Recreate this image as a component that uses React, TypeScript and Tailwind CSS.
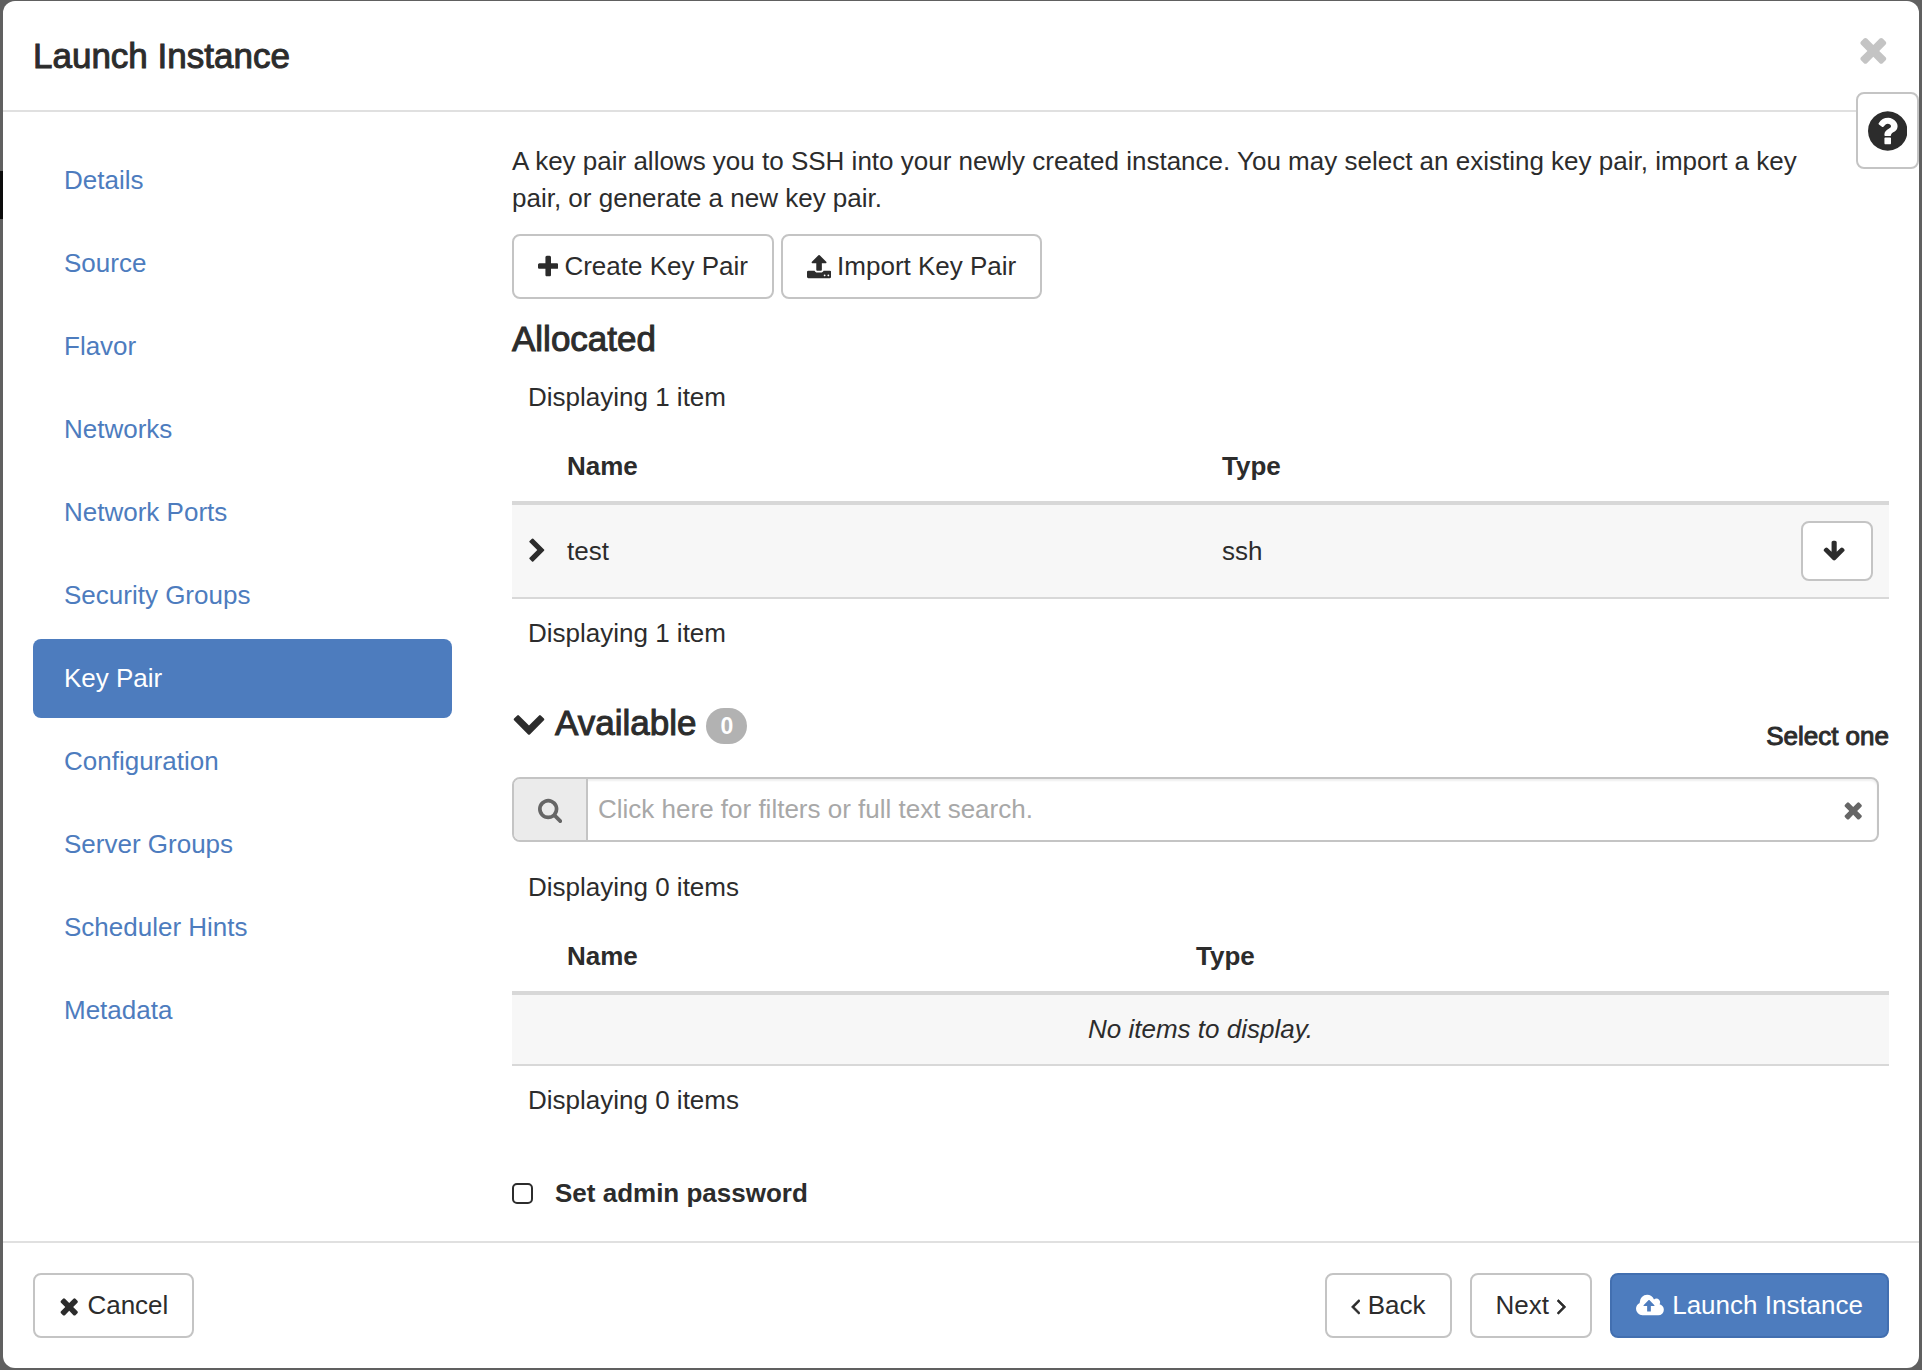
import React, { useState } from "react";

const icons = {
  times: {
    box: "192 0 1408 1792",
    d: "M1490 1322q0 40-28 68l-136 136q-28 28-68 28t-68-28l-294-294-294 294q-28 28-68 28t-68-28l-136-136q-28-28-28-68t28-68l294-294-294-294q-28-28-28-68t28-68l136-136q28-28 68-28t68 28l294 294 294-294q28-28 68-28t68 28l136 136q28 28 28 68t-28 68l-294 294 294 294q28 28 28 68z",
  },
  plus: {
    box: "192 0 1408 1792",
    d: "M1600 736v192q0 40-28 68t-68 28h-416v416q0 40-28 68t-68 28h-192q-40 0-68-28t-28-68v-416h-416q-40 0-68-28t-28-68v-192q0-40 28-68t68-28h416v-416q0-40 28-68t68-28h192q40 0 68 28t28 68v416h416q40 0 68 28t28 68z",
  },
  upload: {
    box: "64 0 1664 1792",
    d: "M1344 1472q0-26-19-45t-45-19-45 19-19 45 19 45 45 19 45-19 19-45zm256 0q0-26-19-45t-45-19-45 19-19 45 19 45 45 19 45-19 19-45zm128-224v320q0 40-28 68t-68 28h-1472q-40 0-68-28t-28-68v-320q0-40 28-68t68-28h427q21 56 70.5 92t110.5 36h256q61 0 110.5-36t70.5-92h427q40 0 68 28t28 68zm-325-648q-17 40-59 40h-256v448q0 26-19 45t-45 19h-256q-26 0-45-19t-19-45v-448h-256q-42 0-59-40-17-39 14-69l448-448q18-19 45-19t45 19l448 448q31 30 14 69z",
  },
  question: {
    box: "128 0 1536 1792",
    d: "M1024 1376v-192q0-14-9-23t-23-9h-192q-14 0-23 9t-9 23v192q0 14 9 23t23 9h192q14 0 23-9t9-23zm256-672q0-88-55.5-163t-138.5-116-170-41q-243 0-371 213-15 24 8 42l132 100q7 6 19 6 16 0 25-12 53-68 86-92 34-24 86-24 48 0 85.5 26t37.5 59q0 38-20 61t-68 45q-63 28-115.5 86.5t-52.5 125.5v36q0 14 9 23t23 9h192q14 0 23-9t9-23q0-19 21.5-49.5t54.5-49.5q32-18 49-28.5t46-35 44.5-48 28-60.5 12.5-81zm384 192q0 209-103 385.5t-279.5 279.5-385.5 103-385.5-103-279.5-279.5-103-385.5 103-385.5 279.5-279.5 385.5-103 385.5 103 279.5 279.5 103 385.5z",
  },
  chevronRight: {
    box: "256 0 1280 1792",
    d: "M1363 877l-742 742q-19 19-45 19t-45-19l-166-166q-19-19-19-45t19-45l531-531-531-531q-19-19-19-45t19-45l166-166q19-19 45-19t45 19l742 742q19 19 19 45t-19 45z",
  },
  chevronDown: {
    box: "0 0 1792 1792",
    d: "M1683 808l-742 741q-19 19-45 19t-45-19l-742-741q-19-19-19-45.5t19-45.5l166-165q19-19 45-19t45 19l531 531 531-531q19-19 45-19t45 19l166 165q19 19 19 45.5t-19 45.5z",
  },
  arrowDown: {
    box: "64 0 1664 1792",
    d: "M1675 832q0 53-37 90l-651 652q-39 37-91 37-53 0-90-37l-651-652q-38-36-38-90 0-53 38-91l74-75q39-37 91-37 53 0 90 37l294 294v-704q0-52 38-90t90-38h128q52 0 90 38t38 90v704l294-294q37-37 90-37 52 0 91 37l75 75q37 39 37 91z",
  },
  search: {
    box: "64 0 1664 1792",
    d: "M1216 832q0-185-131.5-316.5t-316.5-131.5-316.5 131.5-131.5 316.5 131.5 316.5 316.5 131.5 316.5-131.5 131.5-316.5zm512 832q0 52-38 90t-90 38q-54 0-90-38l-343-342q-179 124-399 124-143 0-273.5-55.5t-225-150-150-225-55.5-273.5 55.5-273.5 150-225 225-150 273.5-55.5 273.5 55.5 225 150 150 225 55.5 273.5q0 220-124 399l343 343q37 37 37 90z",
  },
  angleLeft: {
    box: "576 0 640 1792",
    d: "M1203 544q0 13-10 23l-393 393 393 393q10 10 10 23t-10 23l-50 50q-10 10-23 10t-23-10l-466-466q-10-10-10-23t10-23l466-466q10-10 23-10t23 10l50 50q10 10 10 23z",
  },
  angleRight: {
    box: "576 0 640 1792",
    d: "M1171 960q0 13-10 23l-466 466q-10 10-23 10t-23-10l-50-50q-10-10-10-23t10-23l393-393-393-393q-10-10-10-23t10-23l50-50q10-10 23-10t23 10l466 466q10 10 10 23z",
  },
  cloudUpload: {
    box: "-64 0 1920 1792",
    d: "M1216 864q0-14-9-23l-352-352q-9-9-23-9t-23 9l-351 351q-10 12-10 24 0 14 9 23t23 9h224v352q0 13 9.5 22.5t22.5 9.5h192q13 0 22.5-9.5t9.5-22.5v-352h224q13 0 22.5-9.5t9.5-22.5zm640 288q0 159-112.5 271.5t-271.5 112.5h-1088q-185 0-316.5-131.5t-131.5-316.5q0-130 70-240t188-165q-2-30-2-43 0-212 150-362t362-150q156 0 285.5 87t188.5 231q71-62 166-62 106 0 181 75t75 181q0 76-41 138 130 31 213.5 135.5t83.5 238.5z",
  },
};

function Icon({ name, className = "h-[26px]" }: { name: keyof typeof icons; className?: string }) {
  return (
    <svg viewBox={icons[name].box} className={`w-auto shrink-0 fill-current ${className}`} aria-hidden="true">
      <path d={icons[name].d} />
    </svg>
  );
}

const steps = [
  "Details",
  "Source",
  "Flavor",
  "Networks",
  "Network Ports",
  "Security Groups",
  "Key Pair",
  "Configuration",
  "Server Groups",
  "Scheduler Hints",
  "Metadata",
];

const btn = "flex items-center h-[65px] px-6 rounded-lg border-2 whitespace-nowrap";
const btnDefault = `${btn} bg-white border-[#c4c4c4]`;
const heading = "text-[35px] leading-[39px] [-webkit-text-stroke:1px]";
const th = "px-4 py-4 text-left font-bold border-b-4 border-[#d8d8d8]";
const td = "px-4 border-b-2 border-[#d8d8d8]";

export default function App() {
  const [active, setActive] = useState("Key Pair");
  const [query, setQuery] = useState("");
  const [setPassword, setSetPassword] = useState(false);

  return (
    <div className="relative min-h-screen bg-[#606060] px-[3px] pt-px pb-0.5 flex flex-col font-['Liberation_Sans',Arial,sans-serif] text-[26px] leading-[37px] text-[#2c2c2c]">
      {/* Page header showing behind the dialog */}
      <div className="absolute left-0 top-[171px] w-[3px] h-12 bg-[#0c0c0c]" />

      <div role="dialog" aria-label="Launch Instance" className="relative flex-grow flex flex-col bg-white rounded-xl">
        {/* Header */}
        <header className="flex items-start justify-between px-[30px] py-[35px] border-b-2 border-[#e0e0e0]">
          <h1 className={heading}>Launch Instance</h1>
          <button aria-label="Close" className="text-[#c4c4c4]">
            <Icon name="times" className="h-[39px] -mt-1.5" />
          </button>
        </header>
        <button
          aria-label="Help"
          className="absolute right-0 top-[91px] w-[63px] h-[77px] flex items-center justify-center bg-white border-2 border-[#c4c4c4] rounded-lg"
        >
          <Icon name="question" className="h-[46px]" />
        </button>

        {/* Body */}
        <div className="flex-grow flex px-[30px] pt-[29px] pb-7">
          <nav className="w-[419px] shrink-0 mr-[60px] flex flex-col gap-1">
            {steps.map((step) => (
              <a
                key={step}
                href="#"
                onClick={() => setActive(step)}
                className={`px-[31px] py-[21px] rounded-lg ${
                  step === active ? "bg-[#4d7cbe] text-white" : "text-[#4d7cbe]"
                }`}
              >
                {step}
              </a>
            ))}
          </nav>

          <main className="flex-grow min-w-0 pt-0.5">
            <p className="mr-10">
              A key pair allows you to SSH into your newly created instance. You may select an existing key pair,
              import a key pair, or generate a new key pair.
            </p>
            <div className="flex gap-[7px] mt-[17px]">
              <button className={`${btnDefault} gap-1.5`}>
                <Icon name="plus" /> Create Key Pair
              </button>
              <button className={`${btnDefault} gap-1.5`}>
                <Icon name="upload" /> Import Key Pair
              </button>
            </div>

            {/* Allocated */}
            <h2 className={`mt-5 mb-[5px] ${heading}`}>Allocated</h2>
            <div className="p-4">Displaying 1 item</div>
            <table className="w-full table-fixed border-separate border-spacing-0">
              <thead>
                <tr>
                  <th className={`${th} w-[39px]`} />
                  <th className={`${th} w-[655px]`}>Name</th>
                  <th className={th}>Type</th>
                  <th className={`${th} w-[104px]`} />
                </tr>
              </thead>
              <tbody>
                <tr className="bg-[#f7f7f7]">
                  <td className="pl-4 border-b-2 border-[#d8d8d8]">
                    <button aria-label="Show details" className="block">
                      <Icon name="chevronRight" />
                    </button>
                  </td>
                  <td className={td}>test</td>
                  <td className={td}>ssh</td>
                  <td className={`${td} py-4`}>
                    <button
                      aria-label="Deallocate"
                      className="w-[72px] h-[60px] pr-1.5 flex items-center justify-center bg-white border-2 border-[#c4c4c4] rounded-lg"
                    >
                      <Icon name="arrowDown" className="h-6" />
                    </button>
                  </td>
                </tr>
              </tbody>
            </table>
            <div className="p-4">Displaying 1 item</div>

            {/* Available */}
            <div className="flex items-start justify-between mt-8">
              <h2 className={`flex items-center ${heading}`}>
                <button aria-label="Toggle available" className="mr-[9px]">
                  <Icon name="chevronDown" className="h-[34px]" />
                </button>
                Available
                <span className="ml-[10px] mt-2 px-[14px] h-9 rounded-full bg-[#b2b2b2] text-white text-[23px] leading-9 font-bold [-webkit-text-stroke:0]">
                  0
                </span>
              </h2>
              <span className="mt-[18px] [-webkit-text-stroke:1px]">Select one</span>
            </div>
            <div className="flex h-[65px] mt-[22px] mr-[10px] mb-[11px] border-2 border-[#c4c4c4] rounded-lg overflow-hidden shadow-[inset_0_2px_2px_#0001]">
              <label
                htmlFor="key-search"
                aria-label="Search"
                className="w-[74px] flex items-center justify-center bg-[#ebebeb] border-r-2 border-[#c4c4c4] text-[#666]"
              >
                <Icon name="search" />
              </label>
              <input
                id="key-search"
                type="text"
                placeholder="Click here for filters or full text search."
                value={query}
                onChange={(e) => setQuery(e.target.value)}
                className="flex-grow px-[10px] bg-transparent placeholder-[#a8a8a8] focus:outline-none"
              />
              <button aria-label="Clear" onClick={() => setQuery("")} className="px-[14px] text-[#666]">
                <Icon name="times" />
              </button>
            </div>
            <div className="p-4">Displaying 0 items</div>
            <table className="w-full table-fixed border-separate border-spacing-0">
              <thead>
                <tr>
                  <th className={`${th} w-[39px]`} />
                  <th className={`${th} w-[629px]`}>Name</th>
                  <th className={th}>Type</th>
                </tr>
              </thead>
              <tbody>
                <tr className="bg-[#f7f7f7]">
                  <td colSpan={3} className={`${td} py-4 text-center italic`}>
                    No items to display.
                  </td>
                </tr>
              </tbody>
            </table>
            <div className="p-4">Displaying 0 items</div>

            <label className="flex items-center mt-10 font-bold">
              <input
                type="checkbox"
                checked={setPassword}
                onChange={(e) => setSetPassword(e.target.checked)}
                className="appearance-none w-[21px] h-[21px] mr-[22px] border-2 border-[#2c2c2c] rounded-[5px] bg-white checked:bg-[#4d7cbe]"
              />
              Set admin password
            </label>
          </main>
        </div>

        {/* Footer */}
        <footer className="flex justify-between px-[30px] py-[30px] border-t-2 border-[#e0e0e0]">
          <button className={`${btnDefault} gap-2`}>
            <Icon name="times" /> Cancel
          </button>
          <div className="flex gap-[18px]">
            <button className={`${btnDefault} gap-2`}>
              <Icon name="angleLeft" className="h-[26px] stroke-current [stroke-width:50]" /> Back
            </button>
            <button className={`${btnDefault} gap-2`}>
              Next <Icon name="angleRight" className="h-[26px] stroke-current [stroke-width:50]" />
            </button>
            <button className={`${btn} gap-2 bg-[#4d7cbe] border-[#426fb0] text-white`}>
              <Icon name="cloudUpload" /> Launch Instance
            </button>
          </div>
        </footer>
      </div>
    </div>
  );
}
